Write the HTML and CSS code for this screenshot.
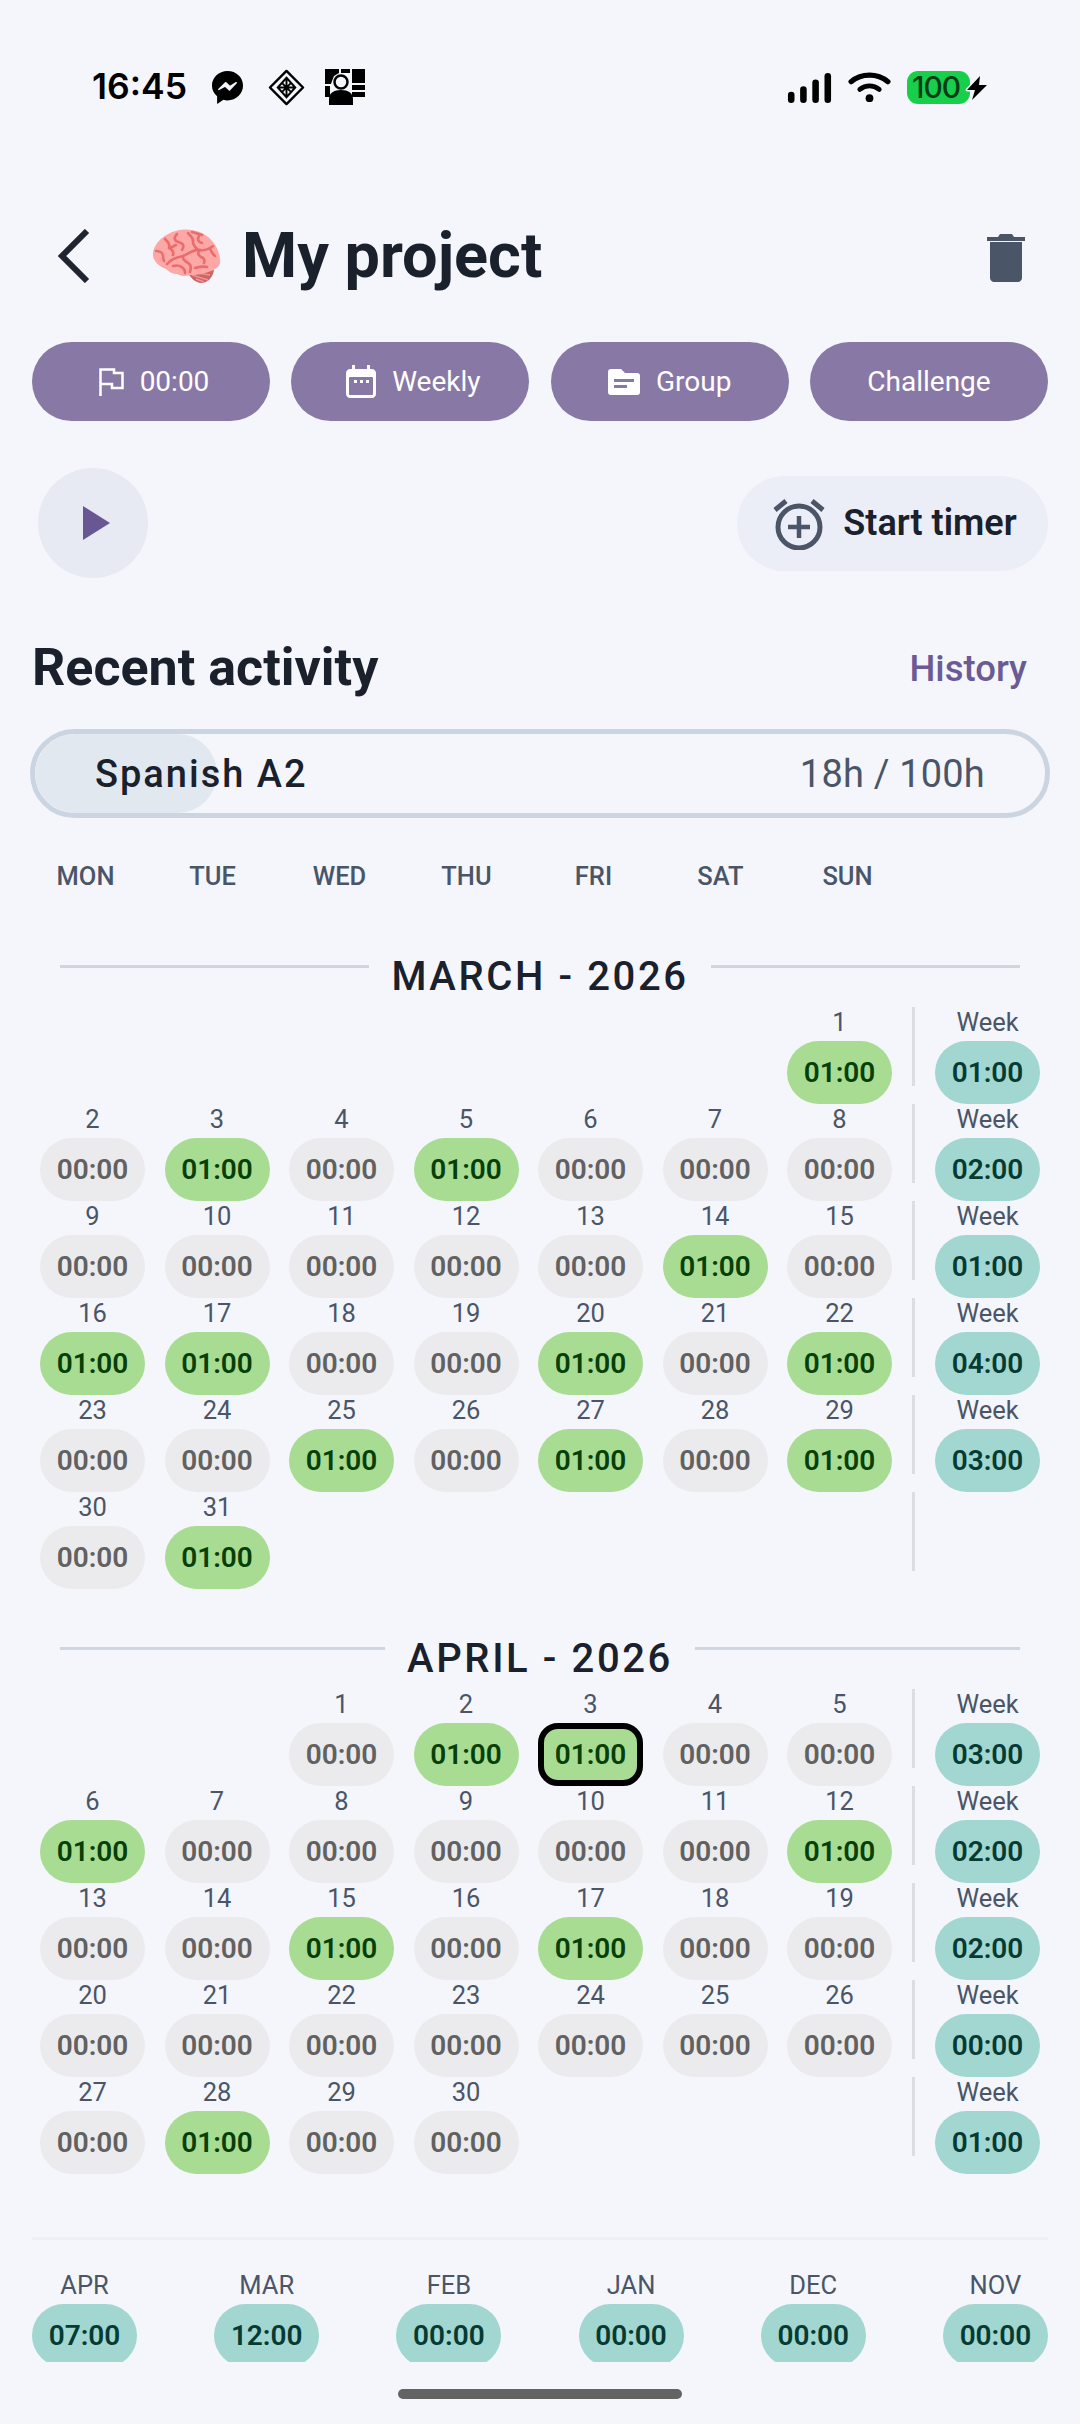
FILE: index.html
```html
<!DOCTYPE html>
<html lang="en">
<head>
    <meta charset="UTF-8">
    <meta name="viewport" content="width=device-width, initial-scale=1.0">
    <title>My project</title>
    <link rel="stylesheet" href="styles.css">
</head>
<body>
    <div class="status-bar">
        <div class="status-left">
            <span class="clock">16:45</span>
            <svg width="33" height="35" viewBox="0 0 34 36"><path d="M17 1C8 1 1 7.700 1 16c0 4.500 2 8.400 5.300 11.100V35l6.500-4.300c1.300.4 2.700.6 4.200.6 9 0 16-6.800 16-15.300S26 1 17 1z" fill="#000"/><path d="M8 20l7-7 4.500 4 6.500-4-7 7.500-4.500-4z" fill="#f4f6fb" stroke="#f4f6fb" stroke-width="1.500" stroke-linejoin="round"/></svg>
            <svg width="37" height="37" viewBox="0 0 38 38" fill="none" stroke="#000"><path d="M19 2l17 17-17 17L2 19z" stroke-width="2.500" stroke-linejoin="round"/><path d="M19 9l9 10-9 10-9-10zM10 19h18M19 9v20M14 14l10 10M24 14L14 24" stroke-width="2"/></svg>
            <svg class="people" width="40" height="36" viewBox="0 0 40 36"><path d="M0 0h14v4l-5 3-2 5-1 3H0zM16 0h9v4h-9zM27 0h13v14H27zM27 16h13v5H27zM27 23h13v5H27zM0 17h5v11H0z" fill="#000"/><circle cx="16" cy="13" r="6.500" fill="none" stroke="#000" stroke-width="2.500"/><path d="M4 36V30c0-6 5-9 12-9s12 3 12 9v6z" fill="#000"/></svg>
        </div>
        <div class="status-right">
            <svg width="45" height="30" viewBox="0 0 46 32" fill="#000"><rect x="0" y="20" width="7" height="12" rx="3.500"/><rect x="13" y="14" width="7" height="18" rx="3.500"/><rect x="26" y="7" width="7" height="25" rx="3.500"/><rect x="39" y="0" width="7" height="32" rx="3.500"/></svg>
            <svg width="43" height="31" viewBox="0 0 44 32" fill="none" stroke="#000" stroke-linecap="round"><path d="M3 10c11-9 27-9 38 0" stroke-width="5.500"/><path d="M12 18c6-5 14-5 20 0" stroke-width="5"/><circle cx="22" cy="27" r="4" fill="#000" stroke="none"/></svg>
            <div class="battery"><span class="battery-level">100</span><svg class="bolt" width="26" height="28" viewBox="0 0 26 28"><path d="M16 2L3 16h8l-3 10 15-15h-8z" fill="#000" stroke="#f4f6fb" stroke-width="3" paint-order="stroke" stroke-linejoin="round"/></svg></div>
        </div>
    </div>

    <div class="header">
        <svg class="back" width="32" height="54" viewBox="0 0 32 54" fill="none" stroke="#1e2530" stroke-width="6"><path d="M29 2L4 27l25 25"/></svg>
        <svg class="brain" width="69" height="54" viewBox="0 0 69 54">
            <path d="M35 42c8 0 19 0 27-1-1 7-6 13-13 13-5 0-11-5-14-12z" fill="#cf6464"/>
            <path d="M40 46l16 5M38 43l20 3M44 50l8 3" stroke="#eb9595" stroke-width="1.500" fill="none"/>
            <path d="M1 27C0 15 13 4 27 1c7-1.500 17 0 23 3 8 4 15 12 17 21 2 7 2 12-4 15-7 4-17 6-25 6-4 2-9 1-13-1-4 0-8-2-11-5C8 38 2 33 1 27z" fill="#fea7a7"/>
            <g fill="none" stroke="#ea6d6d" stroke-width="2.600" stroke-linecap="round" stroke-linejoin="round">
                <path d="M13 10c3 3 5 5 4 9 3 1 5 4 4 7M4 22c4 0 7 2 7 5 0 3 1 4 1 5"/>
                <path d="M25 5c-3 3-3 5-1 7l5 2c3 1 3 4 1 7M18 19l6-3"/>
                <path d="M36 4c3 4 6 5 5 9 0 3 2 5 4 7M40 3l10 3M47 7c-2 3-1 6 3 7"/>
                <path d="M15 35c4-5 11-7 16-8 7-3 11-7 17-6 5 1 9-1 13-4"/>
                <path d="M31 27c-1 3 2 5 5 7 4 2 3 6 2 9M21 37c4-1 8 0 10 2 2 2 2 3 2 5"/>
                <path d="M48 21c-3 3-2 5 1 7 3 1 4 3 3 6M58 20c2 3 2 5 5 7M43 39c4-1 8-2 12-1"/>
            </g>
        </svg>
        <h1 class="title">My project</h1>
        <svg class="trash" width="38" height="48" viewBox="0 0 38 48" fill="#4a5568"><path d="M13 0h12l2 3h11v4H0V3h11z"/><path d="M3 8h32v36c0 2-2 4-4 4H7c-2 0-4-2-4-4z"/></svg>
    </div>

    <div class="chips">
        <div class="chip chip-icon">
            <svg width="25" height="28" viewBox="0 0 25 28" fill="none" stroke="#fff" stroke-width="2.500"><path d="M1.500 28V1.500H15V5h8.500v15H13v-4H1.500"/></svg>
            <span>00:00</span>
        </div>
        <div class="chip chip-icon">
            <svg width="30" height="33" viewBox="0 0 30 33"><path d="M6 0h3v4h12V0h3v4h2c2 0 4 2 4 4v21c0 2-2 4-4 4H4c-2 0-4-2-4-4V8c0-2 2-4 4-4h2z" fill="#fff"/><rect x="3" y="12" width="24" height="18" rx="1" fill="#8878a6"/><path d="M8 15h3v3H8zM14 15h3v3h-3zM20 15h3v3h-3z" fill="#fff"/></svg>
            <span>Weekly</span>
        </div>
        <div class="chip">
            <svg width="32" height="26" viewBox="0 0 32 26"><path d="M3 0h10l4 4h12c2 0 3 1 3 3v16c0 2-1 3-3 3H3c-2 0-3-1-3-3V3c0-2 1-3 3-3z" fill="#fff"/><path d="M6 10h20v3H6zM6 16h13v3H6z" fill="#8878a6"/></svg>
            <span>Group</span>
        </div>
        <div class="chip"><span>Challenge</span></div>
    </div>

    <div class="actions">
        <div class="play"><svg width="27" height="34" viewBox="0 0 27 34"><path d="M0 0l27 17L0 34z" fill="#685792"/></svg></div>
        <div class="timer">
            <svg width="52" height="53" viewBox="0 0 52 53" fill="none" stroke="#4a5568"><circle cx="26" cy="30" r="21" stroke-width="5"/><path d="M26 19v22M15 30h22" stroke-width="4.500"/><path d="M2 13L13 4M50 13L39 4" stroke-width="5"/></svg>
            <span>Start timer</span>
        </div>
    </div>

    <div class="section-head">
        <h2>Recent activity</h2>
        <span class="history">History</span>
    </div>

    <div class="progress">
        <div class="progress-fill"></div>
        <span class="progress-name">Spanish A2</span>
        <span class="progress-hours">18h / 100h</span>
    </div>

    <div class="weekdays">
        <span>MON</span><span>TUE</span><span>WED</span><span>THU</span><span>FRI</span><span>SAT</span><span>SUN</span>
    </div>

    <div class="month-title"><span>MARCH - 2026</span></div>
    <div class="calendar">
        <div class="day blank"></div><div class="day blank"></div><div class="day blank"></div><div class="day blank"></div><div class="day blank"></div><div class="day blank"></div>
        <div class="day"><span>1</span><b class="on">01:00</b></div>
        <div class="week"><span>Week</span><b>01:00</b></div>

        <div class="day"><span>2</span><b>00:00</b></div>
        <div class="day"><span>3</span><b class="on">01:00</b></div>
        <div class="day"><span>4</span><b>00:00</b></div>
        <div class="day"><span>5</span><b class="on">01:00</b></div>
        <div class="day"><span>6</span><b>00:00</b></div>
        <div class="day"><span>7</span><b>00:00</b></div>
        <div class="day"><span>8</span><b>00:00</b></div>
        <div class="week"><span>Week</span><b>02:00</b></div>

        <div class="day"><span>9</span><b>00:00</b></div>
        <div class="day"><span>10</span><b>00:00</b></div>
        <div class="day"><span>11</span><b>00:00</b></div>
        <div class="day"><span>12</span><b>00:00</b></div>
        <div class="day"><span>13</span><b>00:00</b></div>
        <div class="day"><span>14</span><b class="on">01:00</b></div>
        <div class="day"><span>15</span><b>00:00</b></div>
        <div class="week"><span>Week</span><b>01:00</b></div>

        <div class="day"><span>16</span><b class="on">01:00</b></div>
        <div class="day"><span>17</span><b class="on">01:00</b></div>
        <div class="day"><span>18</span><b>00:00</b></div>
        <div class="day"><span>19</span><b>00:00</b></div>
        <div class="day"><span>20</span><b class="on">01:00</b></div>
        <div class="day"><span>21</span><b>00:00</b></div>
        <div class="day"><span>22</span><b class="on">01:00</b></div>
        <div class="week"><span>Week</span><b>04:00</b></div>

        <div class="day"><span>23</span><b>00:00</b></div>
        <div class="day"><span>24</span><b>00:00</b></div>
        <div class="day"><span>25</span><b class="on">01:00</b></div>
        <div class="day"><span>26</span><b>00:00</b></div>
        <div class="day"><span>27</span><b class="on">01:00</b></div>
        <div class="day"><span>28</span><b>00:00</b></div>
        <div class="day"><span>29</span><b class="on">01:00</b></div>
        <div class="week"><span>Week</span><b>03:00</b></div>

        <div class="day"><span>30</span><b>00:00</b></div>
        <div class="day"><span>31</span><b class="on">01:00</b></div>
        <div class="day blank"></div><div class="day blank"></div><div class="day blank"></div><div class="day blank"></div><div class="day blank"></div>
        <div class="week"></div>
    </div>

    <div class="month-title second"><span>APRIL - 2026</span></div>
    <div class="calendar">
        <div class="day blank"></div><div class="day blank"></div>
        <div class="day"><span>1</span><b>00:00</b></div>
        <div class="day"><span>2</span><b class="on">01:00</b></div>
        <div class="day"><span>3</span><b class="on today">01:00</b></div>
        <div class="day"><span>4</span><b>00:00</b></div>
        <div class="day"><span>5</span><b>00:00</b></div>
        <div class="week"><span>Week</span><b>03:00</b></div>

        <div class="day"><span>6</span><b class="on">01:00</b></div>
        <div class="day"><span>7</span><b>00:00</b></div>
        <div class="day"><span>8</span><b>00:00</b></div>
        <div class="day"><span>9</span><b>00:00</b></div>
        <div class="day"><span>10</span><b>00:00</b></div>
        <div class="day"><span>11</span><b>00:00</b></div>
        <div class="day"><span>12</span><b class="on">01:00</b></div>
        <div class="week"><span>Week</span><b>02:00</b></div>

        <div class="day"><span>13</span><b>00:00</b></div>
        <div class="day"><span>14</span><b>00:00</b></div>
        <div class="day"><span>15</span><b class="on">01:00</b></div>
        <div class="day"><span>16</span><b>00:00</b></div>
        <div class="day"><span>17</span><b class="on">01:00</b></div>
        <div class="day"><span>18</span><b>00:00</b></div>
        <div class="day"><span>19</span><b>00:00</b></div>
        <div class="week"><span>Week</span><b>02:00</b></div>

        <div class="day"><span>20</span><b>00:00</b></div>
        <div class="day"><span>21</span><b>00:00</b></div>
        <div class="day"><span>22</span><b>00:00</b></div>
        <div class="day"><span>23</span><b>00:00</b></div>
        <div class="day"><span>24</span><b>00:00</b></div>
        <div class="day"><span>25</span><b>00:00</b></div>
        <div class="day"><span>26</span><b>00:00</b></div>
        <div class="week"><span>Week</span><b>00:00</b></div>

        <div class="day"><span>27</span><b>00:00</b></div>
        <div class="day"><span>28</span><b class="on">01:00</b></div>
        <div class="day"><span>29</span><b>00:00</b></div>
        <div class="day"><span>30</span><b>00:00</b></div>
        <div class="day blank"></div><div class="day blank"></div><div class="day blank"></div>
        <div class="week"><span>Week</span><b>01:00</b></div>
    </div>

    <div class="months">
        <div class="month"><span>APR</span><b>07:00</b></div>
        <div class="month"><span>MAR</span><b>12:00</b></div>
        <div class="month"><span>FEB</span><b>00:00</b></div>
        <div class="month"><span>JAN</span><b>00:00</b></div>
        <div class="month"><span>DEC</span><b>00:00</b></div>
        <div class="month"><span>NOV</span><b>00:00</b></div>
    </div>

    <div class="home-bar"></div>
</body>
</html>
```

FILE: styles.css
```css
* {
    box-sizing: border-box;
}

body {
    margin: 0;
    width: 1080px;
    height: 2424px;
    overflow: hidden;
    font-family: Roboto, "Noto Sans", sans-serif;
    background-color: #f4f6fb;
    color: #1a202c;
}

.status-bar {
    height: 110px;
    padding: 68px 90px 0 92px;
    display: flex;
    justify-content: space-between;
    align-items: flex-start;
}

.status-left {
    display: flex;
    align-items: center;
    gap: 24px;
}

.people {
    margin-left: -4px;
}

.clock {
    font-family: Inter, sans-serif;
    font-size: 35.500px;
    line-height: 38px;
    font-weight: 600;
    color: #000;
}

.status-right {
    display: flex;
    align-items: center;
    gap: 16px;
    padding-top: 3px;
}

.battery {
    display: flex;
    align-items: center;
}

.battery-level {
    width: 63px;
    height: 33px;
    border-radius: 11px;
    background-color: #17cf4b;
    color: #063d17;
    font-family: Inter, sans-serif;
    font-size: 30px;
    font-weight: 500;
    line-height: 33px;
    letter-spacing: -1px;
    padding-left: 5px;
}

.bolt {
    margin-left: -6px;
}

.header {
    margin-top: 112px;
    height: 68px;
    padding: 0 55px 0 58px;
    display: flex;
    align-items: center;
}

.back {
    margin-right: 62px;
}

.title {
    margin: 0 0 0 21px;
    font-size: 63px;
    font-weight: 700;
    line-height: 68px;
    flex: 1;
}

.trash {
    margin-top: 4px;
}

.chips {
    margin-top: 52px;
    padding: 0 32px;
    display: flex;
    justify-content: space-between;
}

.chip {
    width: 238px;
    height: 79px;
    border-radius: 40px;
    background-color: #8878a6;
    color: #fff;
    font-size: 28px;
    display: flex;
    align-items: center;
    justify-content: center;
    gap: 16px;
}

.chip-icon {
    padding-left: 6px;
}

.actions {
    margin-top: 47px;
    padding: 0 32px 0 38px;
    display: flex;
    justify-content: space-between;
    align-items: center;
}

.play {
    width: 110px;
    height: 110px;
    border-radius: 50%;
    background-color: #e7eaf3;
    display: flex;
    align-items: center;
    justify-content: center;
    padding-left: 7px;
}

.timer {
    width: 311px;
    height: 95px;
    border-radius: 48px;
    background-color: #ebeef6;
    padding-left: 5px;
    display: flex;
    align-items: center;
    justify-content: center;
    gap: 18px;
    font-size: 36px;
    font-weight: 600;
}

.section-head {
    margin-top: 58px;
    padding: 0 53px 0 32px;
    display: flex;
    justify-content: space-between;
    align-items: center;
    height: 64px;
}

.section-head h2 {
    margin: 0;
    font-size: 52px;
    font-weight: 700;
    line-height: 64px;
}

.history {
    font-size: 36.500px;
    font-weight: 500;
    color: #6b5b95;
}

.progress {
    position: relative;
    overflow: hidden;
    margin: 29px 30px 0;
    height: 89px;
    border: 5px solid #cbd5e1;
    border-radius: 45px;
    padding: 0 60px;
    display: flex;
    justify-content: space-between;
    align-items: center;
    font-size: 38px;
}

.progress-fill {
    position: absolute;
    left: 0;
    top: 0;
    bottom: 0;
    width: 18%;
    border-radius: 40px;
    background-color: #e2e8f0;
}

.progress-name {
    position: relative;
    font-weight: 500;
    letter-spacing: 2px;
}

.progress-hours {
    position: relative;
    color: #4a5568;
    letter-spacing: 0.200px;
}

.weekdays {
    margin-top: 41px;
    padding-left: 22px;
    display: grid;
    grid-template-columns: repeat(7, 127px);
    justify-items: center;
    font-size: 25.500px;
    font-weight: 500;
    line-height: 34px;
    color: #4a5568;
}

.month-title {
    margin: 61px 60px 0;
    display: flex;
    align-items: center;
    gap: 22px;
    font-size: 40px;
    font-weight: 500;
    line-height: 46px;
    letter-spacing: 2.600px;
}

.month-title::before,
.month-title::after {
    content: "";
    flex: 1;
    height: 3px;
    background-color: #cfd6e0;
    margin-bottom: 22px;
}

.month-title.second {
    margin-top: 47px;
}

.calendar {
    margin-top: 7px;
    padding-left: 40px;
    display: grid;
    grid-template-columns: repeat(7, 105px) 129px;
    column-gap: 19.500px;
    grid-auto-rows: 97px;
}

.day,
.week {
    display: flex;
    flex-direction: column;
    align-items: center;
}

.day span,
.week span,
.month span {
    flex: none;
    height: 34px;
    font-size: 25.500px;
    line-height: 31px;
    color: #4a5568;
}

.day b,
.week b,
.month b {
    flex: none;
    width: 105px;
    height: 63px;
    border-radius: 32px;
    font-size: 28px;
    font-weight: 600;
    line-height: 63px;
    text-align: center;
    background-color: #ebebed;
    color: #616161;
}

.day b.on {
    background-color: #a8dc92;
    color: #064006;
}

.day b.today {
    border: 6px solid #000;
    border-radius: 20px;
    line-height: 51px;
}

.week {
    height: 79px;
    padding-left: 20px;
    border-left: 3px solid #dcdde0;
}

.week b,
.month b {
    background-color: #a2d6d0;
    color: #053b33;
}

.months {
    margin: 63px 32px 0;
    padding-top: 30px;
    border-top: 3px solid #eef0f6;
    height: 125px;
    overflow: hidden;
    display: flex;
    justify-content: space-between;
}

.month {
    display: flex;
    flex-direction: column;
    align-items: center;
}

.home-bar {
    width: 284px;
    height: 10px;
    border-radius: 5px;
    background-color: #636363;
    margin: 27px auto 0;
}
```
